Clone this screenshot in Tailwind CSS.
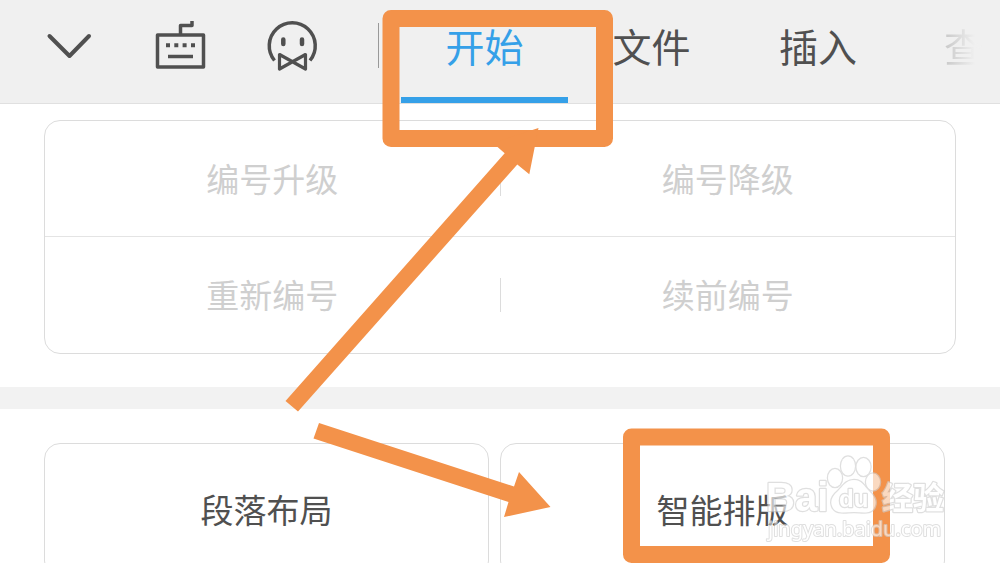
<!DOCTYPE html>
<html lang="zh-CN">
<head>
<meta charset="utf-8">
<meta name="viewport" content="width=device-width, initial-scale=1">
<title>开始</title>
<script src="https://cdn.jsdelivr.net/npm/@tailwindcss/browser@4"></script>
</head>
<body class="relative h-screen overflow-hidden bg-white font-['Noto_Sans_CJK_SC',sans-serif] text-[#505050]">
<header class="flex h-[104px] border-b border-[#e0e0e0] bg-[#f0f0f0] pl-[14px]">
  <div class="flex shrink-0">
    <button type="button" aria-label="收起" class="flex w-[111px] justify-center pt-4">
      <svg class="h-15 w-15" viewBox="0 0 60 60" fill="none" stroke="currentColor" stroke-width="4" stroke-linecap="round" stroke-linejoin="round"><path d="M9.500 20 29.500 40 49 20"/></svg>
    </button>
    <button type="button" aria-label="键盘" class="flex w-[111px] justify-center pt-4">
      <svg class="h-15 w-15" viewBox="0 0 60 60" fill="none" stroke="currentColor" stroke-width="3.500" stroke-linejoin="round"><rect x="6.500" y="19" width="46" height="32"/><path d="M29.500 18V9.500H41V5"/><path d="M17 40.500H42"/><path d="M15 29.300h4M23.300 29.300h4M31.600 29.300h4M40 29.300h4" stroke-width="4"/></svg>
    </button>
    <button type="button" aria-label="助手" class="flex w-[111px] justify-center pt-4">
      <svg class="h-15 w-15" viewBox="0 0 60 60" fill="none" stroke="currentColor" stroke-width="3.500" stroke-linejoin="round"><path d="M12.500 44.500A23 23 0 1 1 48 44.500"/><path d="M21.300 23.500v4.500M40 23.500v4.500" stroke-width="4.500" stroke-linecap="round"/><path d="M17.500 38.500 43.500 53V38.500L17.500 53Z" stroke-width="3.200"/></svg>
    </button>
  </div>
  <div class="mt-[23px] mr-[22px] ml-[31px] h-[45px] w-px shrink-0 bg-[#999]"></div>
  <nav class="flex min-w-0 flex-1 overflow-hidden text-[39px] leading-[88px]">
    <button type="button" class="h-[103px] w-[167px] shrink-0 border-b-6 border-[#35a0e8] pb-2 text-[#35a0e8]">开始</button>
    <button type="button" class="h-[103px] w-[167px] shrink-0 border-b-6 border-transparent pb-2">文件</button>
    <button type="button" class="h-[103px] w-[166px] shrink-0 border-b-6 border-transparent pb-2">插入</button>
    <button type="button" class="h-[103px] w-[125px] shrink-0 border-b-6 border-transparent pb-2"><span class="bg-linear-to-r from-[#c8c8c8] to-[#f0f0f0] to-80% bg-clip-text text-transparent">查</span></button>
  </nav>
</header>
<main class="pt-4 text-[33px]">
  <section class="mx-[44px] divide-y divide-[#e4e4e4] rounded-2xl border border-[#dcdcdc] text-[#cfcfcf]">
    <div class="flex h-[116px] items-center">
      <button type="button" class="flex-1">编号升级</button>
      <div class="h-[34px] w-px bg-[#dcdcdc]"></div>
      <button type="button" class="flex-1">编号降级</button>
    </div>
    <div class="flex h-[116px] items-center">
      <button type="button" class="flex-1">重新编号</button>
      <div class="h-[34px] w-px bg-[#dcdcdc]"></div>
      <button type="button" class="flex-1">续前编号</button>
    </div>
  </section>
  <div class="mt-[33px] h-[22px] bg-[#f2f2f2]"></div>
  <section class="mt-[34px] mr-[55px] ml-[44px] flex gap-[11px]">
    <button type="button" class="h-[134px] flex-1 rounded-2xl border border-[#dcdcdc]">段落布局</button>
    <button type="button" class="h-[134px] flex-1 rounded-2xl border border-[#dcdcdc]">智能排版</button>
  </section>
</main>
<!-- Callout frames, arrows and site watermark -->
<svg class="pointer-events-none absolute top-0 left-0 h-[563px] w-[1000px]" viewBox="0 0 1000 563">
  <g fill="none" stroke="#f3924a" stroke-width="17" stroke-linejoin="round">
    <rect x="391" y="18.500" width="213.500" height="120"/>
    <rect x="631.500" y="437" width="250" height="117.500"/>
  </g>
  <g fill="#f3924a">
    <path d="M285.500 401 504.700 153.300 493 143 538.500 128 529.300 174.300 517.300 164.500 298 411.500Z"/>
    <path d="M319 423 514 486.500 519 472 550.500 507 504 517 508.500 502 313.500 438.500Z"/>
  </g>
  <g fill="#fff" stroke="#cfcfcf" stroke-width="2.500" stroke-linejoin="round" paint-order="stroke" opacity="0.65">
    <text x="766" y="511" font-family="Liberation Sans, sans-serif" font-weight="700" font-size="40">Bai</text>
    <ellipse cx="835" cy="478" rx="7" ry="9"/>
    <ellipse cx="848" cy="466" rx="7" ry="9.500"/>
    <ellipse cx="863.500" cy="467" rx="7" ry="9"/>
    <ellipse cx="873" cy="482" rx="7" ry="8.500"/>
    <path d="M854 480C846 480 843 486 838 491C832 496 830 501 832 506C835 515 845 512 854 512C863 512 872 515 875 506C877 500 874 496 869 491C864 486 862 480 854 480Z"/>
    <text x="839" y="507" font-family="Liberation Sans, sans-serif" font-weight="700" font-size="24">du</text>
    <text x="882" y="509" font-family="Noto Sans CJK SC, sans-serif" font-weight="700" font-size="31">经验</text>
    <text x="768" y="536" font-family="Noto Sans, sans-serif" font-size="20" stroke-width="2">jingyan.baidu.com</text>
  </g>
</svg>
</body>
</html>
